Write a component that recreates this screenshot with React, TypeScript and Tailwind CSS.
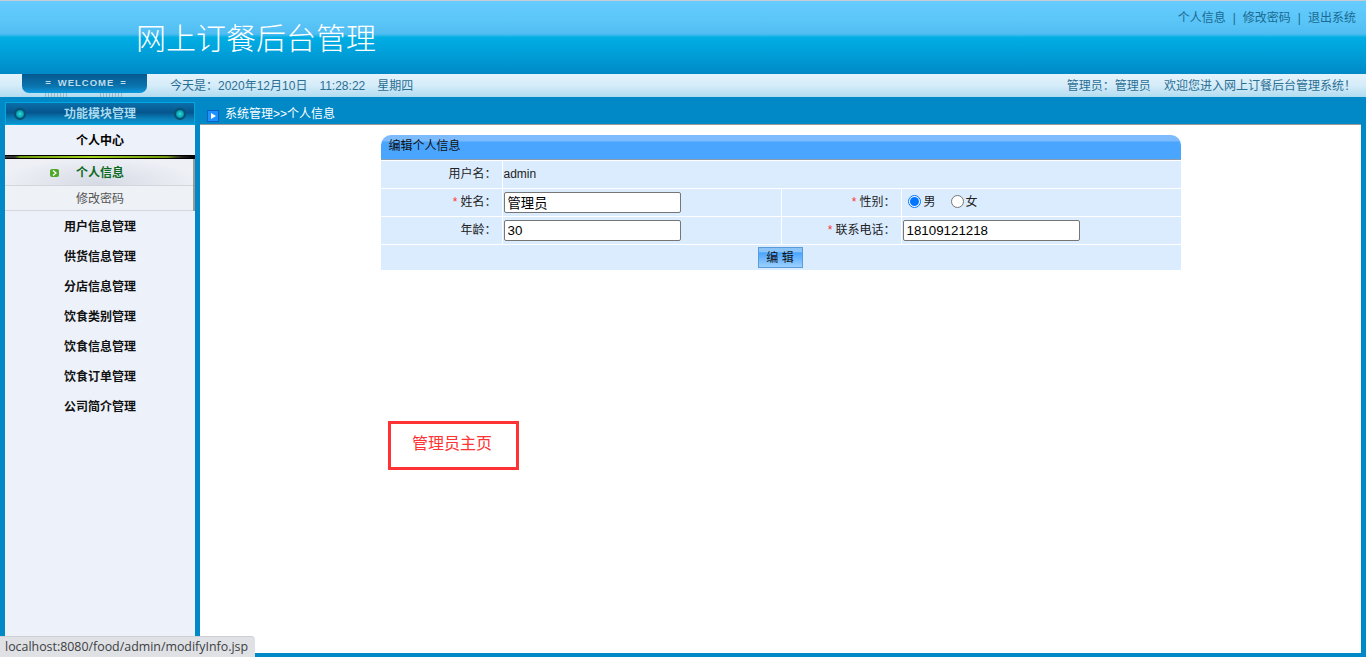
const font = '[font-family:"Liberation_Sans","Noto_Sans_CJK_SC",sans-serif]';

const menu = ['用户信息管理', '供货信息管理', '分店信息管理', '饮食类别管理', '饮食信息管理', '饮食订单管理', '公司简介管理'];

function Orb() {
  return (
    <span className="h-[12px] w-[12px] rounded-full border-2 border-[#04506f] bg-[radial-gradient(circle,#2fe0e0_0%,#0a9db0_60%,#066a8c_100%)]" />
  );
}

function Sidebar() {
  return (
    <aside className="flex w-[190px] shrink-0 flex-col">
      <div className="flex h-[23px] items-center justify-between border border-[#00a8e0] bg-[linear-gradient(#0a6ea8_0%,#05568f_45%,#0a7fb8_75%,#0a93cf_100%)] px-[8px]">
        <Orb />
        <span className="text-[12px] font-bold text-[#a8dcf0]">功能模块管理</span>
        <Orb />
      </div>
      <div className="flex-1 bg-[#edf1fa]">
        <div className="flex h-[30px] items-center justify-center pt-px text-[12px] font-bold text-black">个人中心</div>
        <div className="h-[4px] border-y border-black bg-[linear-gradient(90deg,#333_0%,#333_5%,#6f9a10_8%,#a4d420_45%,#6f9a10_85%,#222_93%,#000_100%)]" />
        <div className="border-r-2 border-[#9a9a9a]">
          <div className="relative flex h-[26px] items-center justify-center bg-[radial-gradient(ellipse_at_50%_95%,#d6dae4_0%,#eef0f6_75%)] pl-[2px] pt-[2px] text-[12px] font-bold text-[#0a6a1e]">
            <span className="absolute left-[45px] flex h-[8px] w-[9px] items-center justify-center rounded-[2px] bg-[#4fa82a]">
              <svg width="5" height="6" viewBox="0 0 5 6">
                <path d="M1 0.5 L4 3 L1 5.5" fill="none" stroke="#fff" strokeWidth="1.3" />
              </svg>
            </span>
            个人信息
          </div>
          <div className="flex h-[26px] items-center justify-center border-y border-[#d4d6dc] bg-[#eef1f6] pl-[2px] pt-[2px] text-[12px] text-[#555]">修改密码</div>
        </div>
        {menu.map((item) => (
          <div key={item} className="flex h-[30px] items-center justify-center pt-[2px] text-[12px] font-bold text-[#111]">
            {item}
          </div>
        ))}
      </div>
    </aside>
  );
}

function Label({ star, text }: { star?: boolean; text: string }) {
  return (
    <div className="flex items-center justify-end bg-[#dbecff] pb-[2px] pr-[5px] text-[12px] text-[#222]">
      {star && <span className="mr-[3px] text-[#f33]">*</span>}
      {text}：
    </div>
  );
}

function Field({ value }: { value: string }) {
  return (
    <div className="flex items-center bg-[#dbecff] pl-[1px]">
      <input
        readOnly
        value={value}
        className="h-[21px] w-[177px] rounded-[2px] border border-[#767676] bg-white px-[3px] text-[13.33px] text-black outline-none"
      />
    </div>
  );
}

function Radio({ checked, className }: { checked?: boolean; className?: string }) {
  return checked ? (
    <span className={`flex h-[13px] w-[13px] shrink-0 items-center justify-center rounded-full border border-[#0075ff] bg-white ${className ?? ''}`}>
      <span className="h-[9px] w-[9px] rounded-full bg-[#0075ff]" />
    </span>
  ) : (
    <span className={`h-[13px] w-[13px] shrink-0 rounded-full border border-[#767676] bg-white ${className ?? ''}`} />
  );
}

function EditForm() {
  return (
    <div className="mx-auto mt-[10px] w-[800px]">
      <div className="flex h-[25px] items-center rounded-t-[10px] border-b border-[#8a9bb0] bg-[linear-gradient(#7dbbff_0%,#7dbbff_26%,#4aa5ff_28%,#4aa5ff_100%)] pb-[3px] pl-[8px] text-[12px] text-[#111]">
        编辑个人信息
      </div>
      <div className="mt-px grid auto-rows-[27px] grid-cols-[121px_278px_119px_279px] gap-px bg-white">
        <Label text="用户名" />
        <div className="col-span-3 flex items-center bg-[#dbecff] pb-[2px] pl-[1px] text-[12px] text-[#222]">admin</div>
        <Label star text="姓名" />
        <Field value="管理员" />
        <Label star text="性别" />
        <div className="flex items-center bg-[#dbecff] pb-[2px] pl-[6px] text-[12px] text-[#222]">
          <Radio checked />
          <span className="ml-[3px]">男</span>
          <Radio className="ml-[15px]" />
          <span className="ml-[2px]">女</span>
        </div>
        <Label text="年龄" />
        <Field value="30" />
        <Label star text="联系电话" />
        <Field value="18109121218" />
      </div>
      <div className="mt-px flex h-[25px] items-center justify-center bg-[#dbecff]">
        <button className="mr-[1px] h-[21px] w-[45px] border border-[#5a9bd8] bg-[linear-gradient(#8cc4f8_0%,#8cc4f8_20%,#4aa5ff_25%,#9cd0ff_100%)] text-[12px] text-[#111]">
          编 辑
        </button>
      </div>
    </div>
  );
}

export default function App() {
  return (
    <div className={`relative flex h-[657px] w-[1366px] flex-col overflow-hidden bg-[#0089c6] ${font}`}>
      <header className="relative flex h-[74px] shrink-0 border-t border-[#c8ccd0] bg-[linear-gradient(#66ccff_0%,#5cc6f8_25%,#50bdf2_45%,#00aee4_50%,#0099d4_80%,#0089c6_100%)]">
        <h1 className="ml-[136px] mt-[19px] text-[30px] font-light leading-[38px] text-white">网上订餐后台管理</h1>
        <nav className="ml-auto mr-[10px] mt-[9px] flex gap-[7px] text-[12px] leading-[16px] text-[#1a6a92]">
          <span>个人信息</span>
          <span>|</span>
          <span>修改密码</span>
          <span>|</span>
          <span>退出系统</span>
        </nav>
      </header>

      <div className="flex h-[23px] shrink-0 items-center bg-[linear-gradient(#e4f3fc_0%,#d5ecf9_50%,#b0dcf0_100%)] text-[12px] text-[#2a6f94]">
        <div className="relative ml-[22px] flex h-[19px] w-[125px] -translate-y-[2px] items-center justify-center gap-[6px] rounded-b-[7px] bg-[linear-gradient(#06598f_0%,#0a74ae_65%,#0a9ae0_100%)] pl-[3px] text-[9.5px] font-bold tracking-[1px] text-[#bcdcec]">
          <span>=</span>
          <span>WELCOME</span>
          <span>=</span>
          <span className="absolute left-[23px] top-[19px] h-[4px] w-[22px] bg-[repeating-linear-gradient(90deg,#9fb6c4_0,#9fb6c4_1px,transparent_1px,transparent_3px)]" />
          <span className="absolute left-[78px] top-[19px] h-[4px] w-[22px] bg-[repeating-linear-gradient(90deg,#9fb6c4_0,#9fb6c4_1px,transparent_1px,transparent_3px)]" />
        </div>
        <div className="ml-[23px] flex gap-[12px]">
          <span>今天是：2020年12月10日</span>
          <span>11:28:22</span>
          <span>星期四</span>
        </div>
        <span className="ml-auto mr-[10px] whitespace-pre">管理员：管理员{'    '}欢迎您进入网上订餐后台管理系统！</span>
      </div>

      <div className="flex min-h-0 flex-1 px-[5px] pb-[4px] pt-[5px]">
        <Sidebar />
        <div className="ml-[5px] flex min-w-0 flex-1 flex-col">
          <div className="flex h-[22px] shrink-0 items-center text-[12px] text-white">
            <span className="ml-[7px] mt-[5px] flex h-[12px] w-[12px] items-center justify-center border border-[#0a5fc0] bg-[#1e90ff]">
              <svg width="5" height="6" viewBox="0 0 5 6">
                <path d="M0 0 L5 3 L0 6 Z" fill="#fff" />
              </svg>
            </span>
            <span className="ml-[6px] pt-px">系统管理&gt;&gt;个人信息</span>
          </div>
          <main className="flex-1 border-t border-[#999] bg-white">
            <EditForm />
            <div className="ml-[188px] mt-[151px] flex h-[49px] w-[131px] items-center justify-center border-[3px] border-[#f33] pb-[3px] pr-[3px] text-[16px] text-[#f33]">
              管理员主页
            </div>
          </main>
        </div>
      </div>

      <div className="absolute bottom-0 left-0 flex h-[21px] items-center rounded-tr-[4px] border-t border-[#cdd0d6] bg-[#dfe1e5] pl-[5px] pr-[7px] text-[12.4px] text-[#3c4043] [font-family:'Open_Sans',sans-serif]">
        localhost:8080/food/admin/modifyInfo.jsp
      </div>
    </div>
  );
}
